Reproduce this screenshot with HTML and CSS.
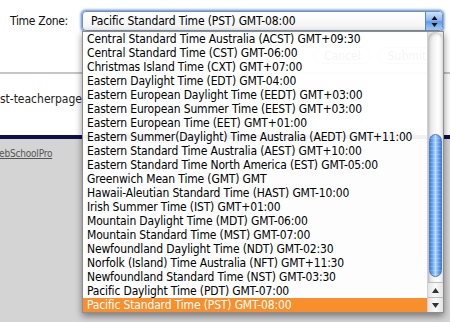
FILE: index.html
```html
<!DOCTYPE html>
<html lang="en">
<head>
    <meta charset="UTF-8">
    <title>Time Zone</title>
    <link rel="stylesheet" href="styles.css">
</head>
<body>
    <div class="tz-row">
        <label class="tz-label">Time Zone:</label>
        <div class="tz-select">
            <span class="tz-value">Pacific Standard Time (PST) GMT-08:00</span>
            <span class="tz-arrows">
                <svg width="7" height="13" viewBox="0 0 7 13">
                    <path d="M3.5 1 L6.5 5 L0.5 5 Z" fill="#111"/>
                    <path d="M0.5 8 L6.5 8 L3.5 12 Z" fill="#111"/>
                </svg>
            </span>

            <div class="tz-menu">
                <ul class="tz-list">
                    <li>Central Standard Time Australia (ACST) GMT+09:30</li>
                    <li>Central Standard Time (CST) GMT-06:00</li>
                    <li>Christmas Island Time (CXT) GMT+07:00</li>
                    <li>Eastern Daylight Time (EDT) GMT-04:00</li>
                    <li>Eastern European Daylight Time (EEDT) GMT+03:00</li>
                    <li>Eastern European Summer Time (EEST) GMT+03:00</li>
                    <li>Eastern European Time (EET) GMT+01:00</li>
                    <li>Eastern Summer(Daylight) Time Australia (AEDT) GMT+11:00</li>
                    <li>Eastern Standard Time Australia (AEST) GMT+10:00</li>
                    <li>Eastern Standard Time North America (EST) GMT-05:00</li>
                    <li>Greenwich Mean Time (GMT) GMT</li>
                    <li>Hawaii-Aleutian Standard Time (HAST) GMT-10:00</li>
                    <li>Irish Summer Time (IST) GMT+01:00</li>
                    <li>Mountain Daylight Time (MDT) GMT-06:00</li>
                    <li>Mountain Standard Time (MST) GMT-07:00</li>
                    <li>Newfoundland Daylight Time (NDT) GMT-02:30</li>
                    <li>Norfolk (Island) Time Australia (NFT) GMT+11:30</li>
                    <li>Newfoundland Standard Time (NST) GMT-03:30</li>
                    <li>Pacific Daylight Time (PDT) GMT-07:00</li>
                    <li class="selected">Pacific Standard Time (PST) GMT-08:00</li>
                </ul>
                <div class="scrollbar">
                    <div class="sb-track">
                        <div class="sb-thumb"></div>
                    </div>
                    <div class="sb-btn">
                        <svg width="7" height="5" viewBox="0 0 7 5"><path d="M3.5 0 L7 5 L0 5 Z" fill="#333"/></svg>
                    </div>
                    <div class="sb-btn">
                        <svg width="7" height="5" viewBox="0 0 7 5"><path d="M0 0 L7 0 L3.5 5 Z" fill="#333"/></svg>
                    </div>
                </div>
            </div>
        </div>
    </div>

    <div class="actions">
        <button class="btn">Cancel</button>
        <button class="btn">Submit</button>
    </div>

    <div class="rule"></div>

    <div class="url-row">
        <span class="url-text">test-teacherpage-</span>
    </div>

    <div class="footer">
        <a class="footer-link" href="#">WebSchoolPro</a>
    </div>
</body>
</html>
```

FILE: styles.css
```css
body {
    margin: 0;
    background: #d4d4d4;
    font-family: "DejaVu Sans Condensed", "DejaVu Sans", sans-serif;
    font-size: 12px;
    color: #000;
    height: 322px;
    overflow: hidden;
}

.tz-row {
    display: flex;
    align-items: center;
    background: #fff;
    padding: 11px 0 0 10px;
}

.tz-label {
    width: 72px;
    letter-spacing: -0.3px;
    color: #111;
}

.tz-select {
    position: relative;
    display: flex;
    align-items: center;
    width: 359px;
    height: 18px;
    border: 1px solid #7b8ea8;
    border-radius: 4px;
    background: linear-gradient(#ffffff, #f2f2f2);
    box-shadow: 0 0 0 1px #86aee6, 0 0 2px 2px rgba(96, 150, 226, 0.6);
}

.tz-value {
    flex: 1;
    padding-left: 8px;
    letter-spacing: -0.15px;
    white-space: nowrap;
}

.tz-arrows {
    display: flex;
    align-items: center;
    justify-content: center;
    width: 16px;
    height: 18px;
    border-left: 1px solid #5b86c4;
    border-radius: 0 3px 3px 0;
    background: linear-gradient(to bottom, #cfe3fb 0%, #8fbaf0 45%, #5f9ae6 55%, #a9d0fb 100%);
}

.tz-menu {
    position: absolute;
    top: 19px;
    left: -1px;
    z-index: 10;
    display: flex;
    width: 360px;
    border: 1px solid #8e8e8e;
    background: rgba(255, 255, 255, 0.95);
    box-shadow: 0 3px 7px rgba(0, 0, 0, 0.45);
}

.tz-list {
    flex: 1;
    list-style: none;
    margin: 0;
    padding: 0;
}

.tz-list li {
    height: 14px;
    line-height: 14px;
    padding-left: 4px;
    letter-spacing: -0.15px;
    white-space: nowrap;
}

.tz-list li.selected {
    background: #f88e2c;
    color: #fff;
}

.scrollbar {
    display: flex;
    flex-direction: column;
    width: 15px;
    border-left: 1px solid #d0d0d0;
    background: linear-gradient(to right, #dcdcdc, #f4f4f4 40%, #ffffff 70%, #e2e2e2);
}

.sb-track {
    flex: 1;
    padding: 102px 1px 0;
    border-radius: 7px 7px 0 0;
    box-shadow: inset 1px 2px 3px rgba(0, 0, 0, 0.18);
}

.sb-thumb {
    height: 143px;
    border-radius: 7px;
    border: 1px solid #4a7fc9;
    box-sizing: border-box;
    background:
        repeating-linear-gradient(to bottom, rgba(255, 255, 255, 0) 0, rgba(255, 255, 255, 0) 3px, rgba(255, 255, 255, 0.18) 3px, rgba(255, 255, 255, 0.18) 4px),
        linear-gradient(to right, #3f7fd8, #7fb2f0 30%, #b9dafd 50%, #7fb2f0 70%, #3c7ad4);
}

.sb-btn {
    display: flex;
    align-items: center;
    justify-content: center;
    height: 14px;
    border-top: 1px solid #bdbdbd;
    background: linear-gradient(to right, #e4e4e4, #fafafa 50%, #e4e4e4);
}

.actions {
    display: flex;
    justify-content: flex-end;
    gap: 7px;
    background: #fff;
    padding: 16px 14px 8px 0;
}

.btn {
    height: 17px;
    padding: 0 9px;
    border: 1px solid #b4b4b4;
    border-radius: 9px;
    background: linear-gradient(#ffffff, #ececec);
    font-family: inherit;
    font-size: 12px;
    color: #333;
}

.rule {
    height: 2px;
    background: #c6c6c6;
}

.url-row {
    height: 61px;
    background: #fff;
    border-bottom: 4px solid #0f0f4e;
    overflow: hidden;
}

.url-text {
    display: block;
    margin: 18px 0 0 -11px;
    white-space: nowrap;
    color: #222;
}

.footer {
    padding: 9px 0 0;
}

.footer-link {
    display: block;
    margin-left: -9px;
    color: #555;
    font-size: 10px;
    letter-spacing: -0.2px;
}
```
